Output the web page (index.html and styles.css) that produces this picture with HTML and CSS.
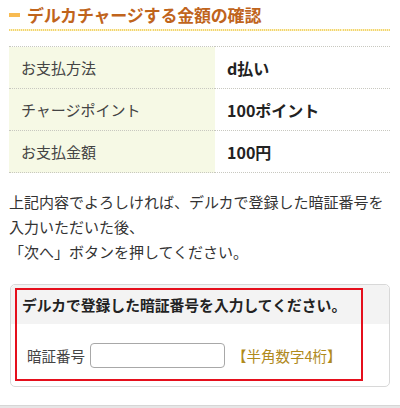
FILE: index.html
```html
<!DOCTYPE html>
<html lang="ja">
<head>
<meta charset="utf-8">
<link rel="stylesheet" href="styles.css">
</head>
<body>
<div class="page">
  <h1 class="title"><span class="title-mark"></span>デルカチャージする金額の確認</h1>
  <table class="info">
    <tr><th>お支払方法</th><td>d払い</td></tr>
    <tr><th>チャージポイント</th><td>100ポイント</td></tr>
    <tr><th>お支払金額</th><td>100円</td></tr>
  </table>
  <p class="note">上記内容でよろしければ、デルカで登録した暗証番号を<br>入力いただいた後、<br>「次へ」ボタンを押してください。</p>
  <div class="pin-box">
    <div class="pin-head">デルカで登録した暗証番号を入力してください。</div>
    <div class="pin-body">
      <span class="pin-label">暗証番号</span>
      <input class="pin-input" type="password">
      <span class="pin-hint">【半角数字4桁】</span>
    </div>
    <div class="highlight"></div>
  </div>
</div>
<div class="footer-band"></div>
</body>
</html>
```

FILE: styles.css
```css
html, body {
  margin: 0;
  padding: 0;
  background: #fff;
}
body {
  font-family: "Noto Sans CJK JP", "Noto Sans", sans-serif;
  color: #333;
  font-size: 15px;
}
.page {
  padding: 0 10px 0 9px;
}
.title {
  margin: 0;
  height: 29px;
  display: flex;
  align-items: center;
  font-size: 17px;
  font-weight: bold;
  color: #c0641c;
  letter-spacing: -0.2px;
  border-bottom: 2px solid transparent;
  border-image: repeating-linear-gradient(90deg, #f2d56e 0 1px, #fcf1c6 1px 2px) 2;
}
.title-mark {
  display: inline-block;
  width: 11px;
  height: 4px;
  background: #f8bb52;
  margin-right: 7px;
}
.info {
  width: 100%;
  border-collapse: collapse;
  margin-top: 15px;
}
.info th, .info td {
  height: 41px;
  padding: 0 12px;
  text-align: left;
  border-top: 1px dotted #c8c8c0;
  border-bottom: 1px dotted #c8c8c0;
  font-size: 15px;
}
.info th {
  width: 182px;
  font-weight: normal;
  color: #444;
  background: #f6f9e5;
}
.info td {
  font-weight: bold;
  font-size: 16px;
  color: #222;
}
.note {
  margin: 16px 0 0;
  line-height: 25px;
  font-size: 15px;
  color: #333;
}
.pin-box {
  position: relative;
  margin: 20px 0 0 1px;
  border: 1px solid #d8d8d8;
  border-radius: 5px;
}
.pin-head {
  height: 39px;
  display: flex;
  align-items: center;
  padding-left: 11px;
  background: #f3f3f3;
  font-weight: bold;
  font-size: 14.8px;
  color: #222;
  border-radius: 5px 5px 0 0;
}
.pin-body {
  height: 62px;
  display: flex;
  align-items: center;
  padding-left: 16px;
  font-size: 14.5px;
}
.pin-label {
  color: #444;
}
.pin-input {
  width: 135px;
  height: 25px;
  box-sizing: border-box;
  margin: 0 7px 0 5px;
  border: 1px solid #a8a8a8;
  border-radius: 4px;
  background: #fff;
}
.pin-hint {
  color: #b08a1c;
}
.highlight {
  position: absolute;
  left: 4px;
  top: 3px;
  width: 348px;
  height: 93px;
  box-sizing: border-box;
  border: 2px solid #e50f1c;
  pointer-events: none;
}
.footer-band {
  margin-top: 18px;
  height: 4px;
  background: #e6e6e6;
  border-top: 1px solid #d6d6d6;
}
```
